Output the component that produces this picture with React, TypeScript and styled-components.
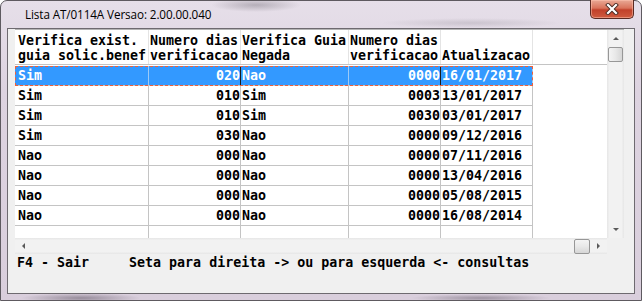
import styled, { createGlobalStyle } from "styled-components";

const GlobalStyle = createGlobalStyle`
  html, body {
    margin: 0;
    padding: 0;
    background: #ffffff;
  }
`;

interface Row {
  exist: string;
  dias: string;
  negada: string;
  diasVerif: string;
  data: string;
}

const rows: Row[] = [
  { exist: "Sim", dias: "020", negada: "Nao", diasVerif: "0000", data: "16/01/2017" },
  { exist: "Sim", dias: "010", negada: "Sim", diasVerif: "0003", data: "13/01/2017" },
  { exist: "Sim", dias: "010", negada: "Sim", diasVerif: "0030", data: "03/01/2017" },
  { exist: "Sim", dias: "030", negada: "Nao", diasVerif: "0000", data: "09/12/2016" },
  { exist: "Nao", dias: "000", negada: "Nao", diasVerif: "0000", data: "07/11/2016" },
  { exist: "Nao", dias: "000", negada: "Nao", diasVerif: "0000", data: "13/04/2016" },
  { exist: "Nao", dias: "000", negada: "Nao", diasVerif: "0000", data: "05/08/2015" },
  { exist: "Nao", dias: "000", negada: "Nao", diasVerif: "0000", data: "16/08/2014" },
];

// larguras das colunas (px), incluindo a linha da direita
const cols = [134, 92, 108, 92, 92];

const App = () => {
  return (
    <>
      <GlobalStyle />
      <Window>
        <TitleBar>
          <Title>Lista AT/0114A Versao: 2.00.00.040</Title>
          <CloseButton>
            <svg width="16" height="12" viewBox="0 0 16 12">
              <path d="M4 2 L12 10 M12 2 L4 10" stroke="#4a2a22" strokeWidth="4" strokeLinecap="square" />
              <path d="M4 2 L12 10 M12 2 L4 10" stroke="#ffffff" strokeWidth="2.2" strokeLinecap="square" />
            </svg>
          </CloseButton>
        </TitleBar>
        <Client>
          <GridBox>
            <TableArea>
              <Table>
                <HeaderRow>
                  <HeaderCell $w={cols[0]} $first>
                    {"Verifica exist.\nguia solic.benef"}
                  </HeaderCell>
                  <HeaderCell $w={cols[1]}>{"Numero dias\nverificacao"}</HeaderCell>
                  <HeaderCell $w={cols[2]}>{"Verifica Guia\nNegada"}</HeaderCell>
                  <HeaderCell $w={cols[3]}>{"Numero dias\nverificacao"}</HeaderCell>
                  <HeaderCell $w={cols[4]}>{"\nAtualizacao"}</HeaderCell>
                </HeaderRow>
                <HeaderGap />
                {rows.map((r, i) => (
                  <DataRow key={i} $selected={i === 0}>
                    <Cell $w={cols[0]} $first $selected={i === 0}>{r.exist}</Cell>
                    <Cell $w={cols[1]} $right $selected={i === 0} $dark>{r.dias}</Cell>
                    <Cell $w={cols[2]} $selected={i === 0}>{r.negada}</Cell>
                    <Cell $w={cols[3]} $right $selected={i === 0} $dark>{r.diasVerif}</Cell>
                    <Cell $w={cols[4]} $selected={i === 0}>{r.data}</Cell>
                  </DataRow>
                ))}
                <DataRow>
                  {cols.map((w, i) => (
                    <Cell key={i} $w={w} $first={i === 0} />
                  ))}
                </DataRow>
              </Table>
            </TableArea>
            <VScroll>
              <ArrowBox>
                <Arrow $dir="up" />
              </ArrowBox>
              <VThumb />
              <Spacer />
              <ArrowBox>
                <Arrow $dir="down" />
              </ArrowBox>
            </VScroll>
            <HScroll>
              <HArrowBox>
                <Arrow $dir="left" />
              </HArrowBox>
              <Spacer />
              <HThumb />
              <HArrowBox>
                <Arrow $dir="right" />
              </HArrowBox>
            </HScroll>
            <Corner />
          </GridBox>
          <Status>F4 - Sair     Seta para direita -&gt; ou para esquerda &lt;- consultas</Status>
        </Client>
      </Window>
    </>
  );
};

const Window = styled.div`
  width: 642px;
  height: 301px;
  box-sizing: border-box;
  border: 1px solid #5e5a60;
  border-radius: 7px 7px 0 0;
  padding: 0 6px 6px 6px;
  display: flex;
  flex-direction: column;
  background:
    radial-gradient(ellipse 60px 5px at 80px 297px, rgba(70, 60, 75, 0.45), transparent),
    radial-gradient(ellipse 70px 4px at 480px 297px, rgba(70, 60, 75, 0.4), transparent),
    radial-gradient(ellipse 45px 7px at 255px 4px, rgba(90, 85, 95, 0.35), transparent),
    radial-gradient(ellipse 90px 5px at 470px 22px, rgba(90, 85, 95, 0.18), transparent),
    linear-gradient(180deg, #e6dfe9 0%, #ddd3e0 30%, #d9cedc 100%);
`;

const TitleBar = styled.div`
  height: 27px;
  display: flex;
  align-items: flex-start;
  justify-content: space-between;
`;

const Title = styled.div`
  font-family: "Open Sans", "Noto Sans", sans-serif;
  font-size: 11.7px;
  color: #000000;
  margin: 5px 0 0 18px;
  letter-spacing: -0.1px;
`;

const CloseButton = styled.div`
  width: 44px;
  height: 19px;
  margin: -1px 1px 0 0;
  box-sizing: border-box;
  border: 1px solid #5a2a22;
  border-top: none;
  border-radius: 0 0 5px 5px;
  display: flex;
  align-items: center;
  justify-content: center;
  background: linear-gradient(180deg, #e9a996 0%, #d9735b 45%, #c1412a 55%, #cf5b3f 100%);
  box-shadow: inset 0 0 0 1px rgba(255, 200, 180, 0.5);
`;

const Client = styled.div`
  flex: 1;
  border: 1px solid #6e6a70;
  background: #f0f0f0;
  padding: 0 9px 0 7px;
  display: flex;
  flex-direction: column;
`;

const GridBox = styled.div`
  display: grid;
  grid-template-columns: 592px 17px;
  grid-template-rows: 208px 16px;
  border-top: 1px solid #b4b4b4;
  background: #ffffff;
  width: 609px;
`;

const TableArea = styled.div`
  overflow: hidden;
  background: #ffffff;
`;

const Table = styled.div`
  display: flex;
  flex-direction: column;
  font-family: "DejaVu Sans Mono", "Liberation Mono", monospace;
  font-weight: bold;
  font-size: 13.3px;
  color: #000000;
`;

const HeaderRow = styled.div`
  display: flex;
  height: 34px;
  border-bottom: 1px solid #c4c4c4;
`;

const HeaderGap = styled.div`
  height: 1px;
  display: flex;
`;

const HeaderCell = styled.div<{ $w: number; $first?: boolean }>`
  width: ${({ $w }) => $w}px;
  flex-shrink: 0;
  box-sizing: border-box;
  border-right: 1px solid #e4e4e4;
  padding: 3px 0 0 ${({ $first }) => ($first ? 3 : 1)}px;
  white-space: pre;
  line-height: 15px;
`;

const DataRow = styled.div<{ $selected?: boolean }>`
  display: flex;
  height: 20px;
  box-sizing: border-box;
  border-bottom: 1px solid #c4c4c4;
  width: 518px;
  background: ${({ $selected }) => ($selected ? "#3399ff" : "transparent")};
  outline: ${({ $selected }) => ($selected ? "1px dashed #f0603a" : "none")};
  outline-offset: -1px;
`;

const Cell = styled.div<{ $w: number; $first?: boolean; $right?: boolean; $selected?: boolean; $dark?: boolean }>`
  width: ${({ $w }) => $w}px;
  flex-shrink: 0;
  box-sizing: border-box;
  border-right: 1px solid
    ${({ $selected, $dark }) => ($selected ? ($dark ? "#1c1c1c" : "#9ccaf7") : "#c4c4c4")};
  padding: 0 0 0 ${({ $first }) => ($first ? 3 : 1)}px;
  text-align: ${({ $right }) => ($right ? "right" : "left")};
  line-height: 19px;
  white-space: pre;
  color: ${({ $selected }) => ($selected ? "#ffffff" : "#000000")};
`;

const VScroll = styled.div`
  display: flex;
  flex-direction: column;
  align-items: center;
  background: linear-gradient(90deg, #e6e6e6 0%, #f2f2f2 15%, #f2f2f2 85%, #e6e6e6 100%);
`;

const ArrowBox = styled.div`
  height: 17px;
  width: 17px;
  display: flex;
  align-items: center;
  justify-content: center;
`;

const HArrowBox = styled.div`
  height: 16px;
  width: 17px;
  display: flex;
  align-items: center;
  justify-content: center;
`;

const arrowBorders = {
  up: "border-left: 3px solid transparent; border-right: 3px solid transparent; border-bottom: 3px solid #5a5a5a;",
  down: "border-left: 3px solid transparent; border-right: 3px solid transparent; border-top: 3px solid #5a5a5a;",
  left: "border-top: 3px solid transparent; border-bottom: 3px solid transparent; border-right: 3px solid #5a5a5a;",
  right: "border-top: 3px solid transparent; border-bottom: 3px solid transparent; border-left: 3px solid #5a5a5a;",
};

const Arrow = styled.div<{ $dir: "up" | "down" | "left" | "right" }>`
  width: 0;
  height: 0;
  ${({ $dir }) => arrowBorders[$dir]}
`;

const VThumb = styled.div`
  width: 15px;
  height: 15px;
  box-sizing: border-box;
  border: 1px solid #979797;
  border-radius: 2px;
  background: linear-gradient(90deg, #f4f4f4 0%, #e8e8e8 50%, #d6d6d6 100%);
`;

const HThumb = styled.div`
  width: 16px;
  height: 15px;
  box-sizing: border-box;
  border: 1px solid #979797;
  border-radius: 2px;
  background: linear-gradient(180deg, #f4f4f4 0%, #e8e8e8 50%, #d6d6d6 100%);
`;

const Spacer = styled.div`
  flex: 1;
`;

const HScroll = styled.div`
  display: flex;
  align-items: center;
  background: linear-gradient(180deg, #e6e6e6 0%, #f2f2f2 15%, #f2f2f2 85%, #e6e6e6 100%);
`;

const Corner = styled.div`
  background: #f0f0f0;
`;

const Status = styled.div`
  font-family: "DejaVu Sans Mono", "Liberation Mono", monospace;
  font-weight: bold;
  font-size: 13.3px;
  white-space: pre;
  color: #000000;
  padding: 1px 0 0 2px;
  line-height: 15px;
`;

export default App;
